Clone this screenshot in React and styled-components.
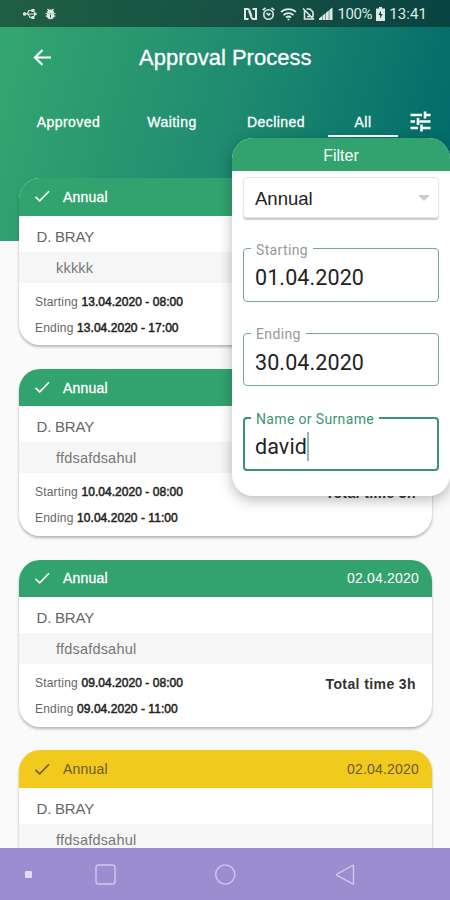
import React, { useState } from "react";
import styled, { createGlobalStyle } from "styled-components";

const GlobalStyle = createGlobalStyle`
  body {
    margin: 0;
    background-color: #fafafa;
    font-family: "Liberation Sans", Arial, sans-serif;
  }
  * {
    box-sizing: border-box;
  }
`;

const Screen = styled.div`
  width: 450px;
  height: 900px;
  display: flex;
  flex-direction: column;
  position: relative;
  overflow: hidden;
  background: linear-gradient(105deg, #34a870 0%, #1f8a70 52%, #006b6a 96%)
    no-repeat 0 0 / 100% 241px #fafafa;
`;

const StatusBar = styled.div`
  height: 27px;
  flex: none;
  display: flex;
  align-items: center;
  justify-content: space-between;
  padding: 1px 23px 0 23px;
  background-color: rgba(12, 22, 24, 0.5);
  color: #dfe8e5;
`;

const StatusGroup = styled.div`
  display: flex;
  align-items: center;
  gap: ${(props) => props.gap};
`;

const StatusText = styled.span`
  font-family: Roboto, sans-serif;
  font-size: 15px;
  line-height: 27px;
  letter-spacing: ${(props) => props.spacing};
`;

const AppBar = styled.header`
  height: 64px;
  flex: none;
  display: flex;
  align-items: center;
  padding: 0 0 2px 33px;
`;

const BackButton = styled.button`
  width: 106px;
  padding: 0;
  border: none;
  background: none;
  color: white;
  display: flex;
`;

const PageTitle = styled.h1`
  margin: 0;
  font-size: 22px;
  font-weight: 400;
  color: white;
  -webkit-text-stroke: 0.3px white;
`;

const Tabs = styled.nav`
  height: 46px;
  flex: none;
  display: flex;
  padding-left: 17px;
`;

const Tab = styled.button`
  width: ${(props) => props.width}px;
  padding: 17px 0 0;
  border: none;
  border-bottom: 2px solid ${(props) => (props.active ? "white" : "transparent")};
  background: none;
  color: white;
  font-family: inherit;
  font-size: 14px;
  line-height: 28px;
  letter-spacing: 0.45px;
  -webkit-text-stroke: 0.3px white;
`;

const FilterButton = styled.button`
  padding: 20px 0 0 12px;
  border: none;
  background: none;
  color: white;
  display: flex;
`;

const List = styled.main`
  flex: 1;
  min-height: 0;
  overflow: hidden;
  padding: 41px 18px 0 19px;
  display: flex;
  flex-direction: column;
  gap: 23.5px;
`;

const Card = styled.article`
  height: 167.3px;
  flex: none;
  border-radius: 21px;
  overflow: hidden;
  background-color: white;
  box-shadow: 0 2px 3px rgba(0, 0, 0, 0.28);
`;

const CardHeader = styled.div`
  height: 37.5px;
  display: flex;
  align-items: center;
  padding: 0 13px 0 15px;
  background-color: ${(props) => (props.waiting ? "#f2c91d" : "#32a36f")};
  color: ${(props) => (props.waiting ? "#6b5a22" : "white")};
`;

const LeaveType = styled.span`
  flex: 1;
  padding-left: 12px;
  font-size: 14px;
  letter-spacing: 0.2px;
  -webkit-text-stroke: ${(props) => (props.waiting ? 0 : "0.3px")} currentColor;
`;

const CardDate = styled.span`
  font-size: 14px;
  letter-spacing: 0.2px;
`;

const Person = styled.div`
  height: 36px;
  padding-left: 17.5px;
  font-size: 15px;
  line-height: 41px;
  letter-spacing: -0.2px;
  color: #666;
`;

const Note = styled.div`
  height: 31px;
  padding-left: 37px;
  background-color: #f6f6f6;
  font-size: 14.5px;
  line-height: 33px;
  letter-spacing: 0.2px;
  color: #777;
`;

const CardFooter = styled.div`
  display: flex;
  justify-content: space-between;
  padding: 6px 16px 0;
`;

const Period = styled.div`
  font-size: 12px;
  line-height: 26px;
  letter-spacing: 0.2px;
  color: #666;
`;

const Moment = styled.span`
  color: #222;
  letter-spacing: 0.04px;
  -webkit-text-stroke: 0.5px #222;
`;

const TotalTime = styled.div`
  font-size: 14px;
  line-height: 29px;
  font-weight: 700;
  letter-spacing: 0.4px;
  color: #333;
`;

const FilterPanel = styled.aside`
  position: absolute;
  top: 138px;
  right: 0;
  width: 218px;
  height: 358px;
  border-radius: 21px;
  overflow: hidden;
  background-color: white;
  box-shadow: 0 4px 14px rgba(0, 0, 0, 0.28);
`;

const FilterTitle = styled.div`
  height: 33px;
  background-color: #32a36f;
  color: white;
  font-size: 16px;
  line-height: 35px;
  text-align: center;
`;

const FilterForm = styled.div`
  display: flex;
  flex-direction: column;
  padding: 6px 11px 0;
`;

const Select = styled.div`
  height: 41px;
  display: flex;
  align-items: center;
  justify-content: space-between;
  padding: 2px 8px 0 11px;
  border: 1px solid #e6e6e6;
  border-radius: 4px;
  box-shadow: 0 2px 1px rgba(0, 0, 0, 0.2);
  color: #222;
  font-size: 18.5px;
`;

const Arrow = styled.span`
  margin-bottom: 2px;
  border: 6px solid transparent;
  border-top-color: #ccc;
  border-bottom: none;
`;

const Field = styled.fieldset`
  height: 62px;
  margin: 22.5px 0 0;
  padding: 0 0 0 ${(props) => (props.focused ? 10 : 11)}px;
  border: ${(props) => (props.focused ? "2px solid #3c9472" : "1px solid #70aa92")};
  border-radius: 4px;
  min-width: 0;
  font-family: Roboto, sans-serif;

  &:first-of-type {
    margin-top: 21.5px;
  }
`;

const FieldLabel = styled.legend`
  margin-left: -4px;
  padding: 2px 5px 0;
  font-size: 14px;
  line-height: 16px;
  letter-spacing: 0.35px;
  color: ${(props) => (props.focused ? "#3c9472" : "#999")};
`;

const FieldValue = styled.div`
  display: flex;
  align-items: center;
  height: 40px;
  font-size: 21.5px;
  letter-spacing: 0.1px;
  color: #222;
`;

const Caret = styled.span`
  width: 2px;
  height: 29px;
  background-color: #85bda6;
`;

const NavBar = styled.footer`
  height: 52px;
  flex: none;
  background-color: #9a8ed0;
`;

const leaves = [
  {
    id: 1,
    note: "kkkkk",
    starting: "13.04.2020 - 08:00",
    ending: "13.04.2020 - 17:00",
    total: "Total time 8h",
  },
  {
    id: 2,
    note: "ffdsafdsahul",
    starting: "10.04.2020 - 08:00",
    ending: "10.04.2020 - 11:00",
    total: "Total time 3h",
  },
  {
    id: 3,
    note: "ffdsafdsahul",
    starting: "09.04.2020 - 08:00",
    ending: "09.04.2020 - 11:00",
    total: "Total time 3h",
  },
  {
    id: 4,
    note: "ffdsafdsahul",
    waiting: true,
  },
];

const tabs = [
  { name: "Approved", width: 103 },
  { name: "Waiting", width: 104 },
  { name: "Declined", width: 104 },
  { name: "All", width: 70 },
];

const fields = [
  { label: "Starting", value: "01.04.2020" },
  { label: "Ending", value: "30.04.2020" },
  { label: "Name or Surname", value: "david", focused: true },
];

const UsbIcon = () => (
  <svg width="14" height="12" viewBox="0 0 14 12" fill="none" stroke="currentColor" strokeWidth="1.1">
    <path d="M1 6h12M4 6l2-3.500h3M5 6l2 3.500h2" />
    <circle cx="1.600" cy="6" r="1.200" fill="currentColor" />
    <path d="M9 1.500h2v2H9zM9 8.500h2v2H9zM11.500 4.500l2 1.500-2 1.500z" fill="currentColor" />
  </svg>
);

const BugIcon = () => (
  <svg width="11" height="12" viewBox="0 0 11 12" fill="currentColor">
    <path d="M2 5a3.500 3.500 0 0 1 7 0zM1.800 5.300h7.400v2.300a3.700 3.700 0 0 1-7.400 0z" />
    <path
      d="M2.500.8l1.500 1.700M8.500.8L7 2.500M.6 5.500h1.500M.6 8.200h1.500M10.400 5.500H8.900M10.400 8.200H8.900"
      stroke="currentColor"
      strokeWidth="1.200"
    />
    <path d="M5.500 6.500v3" stroke="#175343" />
  </svg>
);

const NfcIcon = () => (
  <svg width="13" height="12" viewBox="0 0 13 12" fill="none" stroke="currentColor" strokeWidth="2">
    <path d="M4.500 11H1V1h2.500Q5 1 5.500 2.500L7.500 8.500M8.500 1H12v10H9.500Q8 11 7.500 9.500L5 3" />
  </svg>
);

const AlarmIcon = () => (
  <svg width="13" height="14" viewBox="0 0 13 14" fill="none" stroke="currentColor" strokeWidth="1.600">
    <circle cx="6.500" cy="7.500" r="4.700" />
    <path d="M.7 3.200L3.500.8M12.300 3.200L9.500.8M4.500 6l2 2 2-1.500" />
  </svg>
);

const WifiIcon = () => (
  <svg width="17" height="14" viewBox="0 0 17 14" fill="none" stroke="currentColor" strokeWidth="1.700">
    <path d="M1 5a11 11 0 0 1 15 0M3.500 8a7.500 7.500 0 0 1 10 0M6 10.500a4 4 0 0 1 5 0" />
    <circle cx="8.500" cy="12.500" r="1" fill="currentColor" stroke="none" />
  </svg>
);

const NoSimIcon = () => (
  <svg width="13" height="14" viewBox="0 0 13 14" fill="none" stroke="currentColor" strokeWidth="1.600">
    <path d="M4.500 2H8l3 3v5M2.500 4v8h8.500M1 1.500l11 11M5 9.500h3" />
  </svg>
);

const SignalIcon = () => (
  <svg width="14" height="14" viewBox="0 0 14 14" fill="currentColor">
    <path d="M0 11.500L3 9v4H0zM3.500 8.500l2.900-2.200V13H3.500zM6.900 5.700l2.900-2.200V13H6.900zM10.300 3L13.500.5V13h-3.200z" />
  </svg>
);

const BatteryIcon = () => (
  <svg width="9" height="14" viewBox="0 0 9 14" fill="currentColor">
    <path fillRule="evenodd" d="M3 0h3v1.500h3V14H0V1.500h3zM5 3.500L2.500 8h1.600v3.500L6.700 7H5z" />
  </svg>
);

const BackIcon = () => (
  <svg width="19" height="18" viewBox="0 0 19 18" fill="none" stroke="currentColor" strokeWidth="2.200">
    <path d="M18 8.500H2M9.500 1L2 8.500 9.500 16" />
  </svg>
);

const TuneIcon = () => (
  <svg width="22" height="22" viewBox="0 0 22 22" fill="none" stroke="currentColor" strokeWidth="2.600">
    <path d="M.500 4H12M15 4h5.500M15 .500v7M.500 10.500H5M9.500 10.500h11M8 7v7M.500 17H8M12 17h8.500M11.500 13.500v7" />
  </svg>
);

const CheckIcon = () => (
  <svg width="17" height="13" viewBox="0 0 17 13" fill="none" stroke="currentColor" strokeWidth="1.600">
    <path d="M1.500 6.800l4.200 4L15 1.200" />
  </svg>
);

const NavIcons = () => (
  <svg width="450" height="52" viewBox="0 0 450 52" fill="none" stroke="#d0c8eb" strokeWidth="1.400">
    <rect x="25" y="23" width="7" height="7" rx="1" fill="#e2dcf4" stroke="none" />
    <rect x="96" y="17" width="19" height="19" rx="2.500" />
    <circle cx="225.300" cy="26.500" r="9.600" />
    <path d="M353.500 18v17.500q0 .8-.8.300L337 27.300q-.8-.6 0-1.200l15.700-8.600q.8-.4.8.5z" />
  </svg>
);

const LeaveCard = ({ leave }) => (
  <Card>
    <CardHeader waiting={leave.waiting}>
      <CheckIcon />
      <LeaveType waiting={leave.waiting}>Annual</LeaveType>
      <CardDate>02.04.2020</CardDate>
    </CardHeader>
    <Person>D. BRAY</Person>
    <Note>{leave.note}</Note>
    {leave.starting && (
      <CardFooter>
        <div>
          <Period>
            Starting <Moment>{leave.starting}</Moment>
          </Period>
          <Period>
            Ending <Moment>{leave.ending}</Moment>
          </Period>
        </div>
        <TotalTime>{leave.total}</TotalTime>
      </CardFooter>
    )}
  </Card>
);

const App = () => {
  const [activeTab, setActiveTab] = useState("All");
  const [filterOpen, setFilterOpen] = useState(true);

  return (
    <Screen>
      <GlobalStyle />
      <StatusBar>
        <StatusGroup gap="8px">
          <UsbIcon />
          <BugIcon />
        </StatusGroup>
        <StatusGroup gap="4px">
          <StatusGroup gap="4.8px">
            <NfcIcon />
            <AlarmIcon />
            <WifiIcon />
            <NoSimIcon />
            <SignalIcon />
          </StatusGroup>
          <StatusText spacing="-0.4px">100%</StatusText>
          <BatteryIcon />
          <StatusText spacing="0.1px">13:41</StatusText>
        </StatusGroup>
      </StatusBar>
      <AppBar>
        <BackButton>
          <BackIcon />
        </BackButton>
        <PageTitle>Approval Process</PageTitle>
      </AppBar>
      <Tabs>
        {tabs.map((tab) => (
          <Tab
            key={tab.name}
            width={tab.width}
            active={activeTab === tab.name}
            onClick={() => setActiveTab(tab.name)}
          >
            {tab.name}
          </Tab>
        ))}
        <FilterButton onClick={() => setFilterOpen(!filterOpen)}>
          <TuneIcon />
        </FilterButton>
      </Tabs>
      <List>
        {leaves.map((leave) => (
          <LeaveCard key={leave.id} leave={leave} />
        ))}
      </List>
      {filterOpen && (
        <FilterPanel>
          <FilterTitle>Filter</FilterTitle>
          <FilterForm>
            <Select>
              Annual
              <Arrow />
            </Select>
            {fields.map((field) => (
              <Field key={field.label} focused={field.focused}>
                <FieldLabel focused={field.focused}>{field.label}</FieldLabel>
                <FieldValue>
                  {field.value}
                  {field.focused && <Caret />}
                </FieldValue>
              </Field>
            ))}
          </FilterForm>
        </FilterPanel>
      )}
      <NavBar>
        <NavIcons />
      </NavBar>
    </Screen>
  );
};

export default App;
